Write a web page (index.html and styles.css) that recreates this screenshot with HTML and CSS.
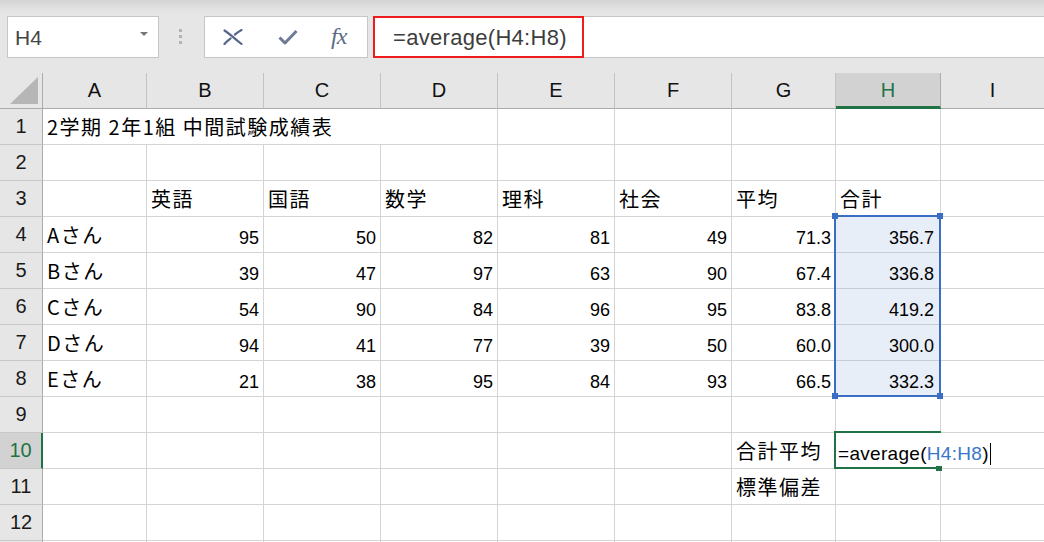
FILE: index.html
```html
<!DOCTYPE html>
<html lang="ja">
<head>
<meta charset="utf-8">
<title>Excel average</title>
<link rel="stylesheet" href="styles.css">
</head>
<body>
<div class="app">
  <div class="toolbar">
    <div class="namebox">
      <span class="namebox-text">H4</span>
      <svg class="namebox-arrow" width="8" height="4" viewBox="0 0 8 4"><path d="M0 0h8L4 4z" fill="#777"/></svg>
    </div>
    <div class="grip"><i></i><i></i><i></i></div>
    <div class="fxbox">
      <svg class="ico-x" width="20" height="16" viewBox="0 0 20 16"><path d="M1.5 1.5 C7 5 12 10 18.5 15 M1.5 15 C3 13 5 11.5 7.5 9.5 M12 5.5 C14 4 16.5 2 18.5 1" fill="none" stroke="#56678a" stroke-width="2.2" stroke-linecap="round"/></svg>
      <svg class="ico-check" width="20" height="16" viewBox="0 0 20 16"><path d="M1.5 8.5 L7 14 L18.5 2" fill="none" stroke="#6d7b95" stroke-width="3" stroke-linejoin="round"/></svg>
      <span class="ico-fx">fx</span>
    </div>
    <div class="formula">
      <div class="formula-hl">=average(H4:H8)</div>
    </div>
  </div>

  <div class="sheet">
    <div class="corner"><svg width="30" height="28" viewBox="0 0 30 28"><path d="M28 0 V27 H0 Z" fill="#b6b6b6"/></svg></div>
    <div class="ch">A</div><div class="ch">B</div><div class="ch">C</div><div class="ch">D</div><div class="ch">E</div><div class="ch">F</div><div class="ch">G</div><div class="ch active">H</div><div class="ch">I</div>

    <div class="rh">1</div>
    <div class="c jp title">2学期 2年1組 中間試験成績表</div><div class="c"></div><div class="c"></div><div class="c"></div><div class="c"></div><div class="c"></div>

    <div class="rh">2</div>
    <div class="c"></div><div class="c"></div><div class="c"></div><div class="c"></div><div class="c"></div><div class="c"></div><div class="c"></div><div class="c"></div><div class="c"></div>

    <div class="rh">3</div>
    <div class="c"></div><div class="c jp">英語</div><div class="c jp">国語</div><div class="c jp">数学</div><div class="c jp">理科</div><div class="c jp">社会</div><div class="c jp">平均</div><div class="c jp">合計</div><div class="c"></div>

    <div class="rh">4</div>
    <div class="c jp">Aさん</div><div class="c n">95</div><div class="c n">50</div><div class="c n">82</div><div class="c n">81</div><div class="c n">49</div><div class="c n">71.3</div><div class="c n sel">356.7</div><div class="c"></div>

    <div class="rh">5</div>
    <div class="c jp">Bさん</div><div class="c n">39</div><div class="c n">47</div><div class="c n">97</div><div class="c n">63</div><div class="c n">90</div><div class="c n">67.4</div><div class="c n sel">336.8</div><div class="c"></div>

    <div class="rh">6</div>
    <div class="c jp">Cさん</div><div class="c n">54</div><div class="c n">90</div><div class="c n">84</div><div class="c n">96</div><div class="c n">95</div><div class="c n">83.8</div><div class="c n sel">419.2</div><div class="c"></div>

    <div class="rh">7</div>
    <div class="c jp">Dさん</div><div class="c n">94</div><div class="c n">41</div><div class="c n">77</div><div class="c n">39</div><div class="c n">50</div><div class="c n">60.0</div><div class="c n sel">300.0</div><div class="c"></div>

    <div class="rh">8</div>
    <div class="c jp">Eさん</div><div class="c n">21</div><div class="c n">38</div><div class="c n">95</div><div class="c n">84</div><div class="c n">93</div><div class="c n">66.5</div><div class="c n sel">332.3</div><div class="c"></div>

    <div class="rh">9</div>
    <div class="c"></div><div class="c"></div><div class="c"></div><div class="c"></div><div class="c"></div><div class="c"></div><div class="c"></div><div class="c"></div><div class="c"></div>

    <div class="rh active">10</div>
    <div class="c"></div><div class="c"></div><div class="c"></div><div class="c"></div><div class="c"></div><div class="c"></div><div class="c jp">合計平均</div><div class="c"></div><div class="c"></div>

    <div class="rh">11</div>
    <div class="c"></div><div class="c"></div><div class="c"></div><div class="c"></div><div class="c"></div><div class="c"></div><div class="c jp">標準偏差</div><div class="c"></div><div class="c"></div>

    <div class="rh">12</div>
    <div class="c"></div><div class="c"></div><div class="c"></div><div class="c"></div><div class="c"></div><div class="c"></div><div class="c"></div><div class="c"></div><div class="c"></div>

    <div class="rh"></div>
    <div class="c"></div><div class="c"></div><div class="c"></div><div class="c"></div><div class="c"></div><div class="c"></div><div class="c"></div><div class="c"></div><div class="c"></div>

    <div class="selection">
      <i class="handle tl"></i><i class="handle tr"></i><i class="handle bl"></i><i class="handle br"></i>
    </div>
    <div class="active-cell"></div>
    <div class="editor">=average(<span class="ref">H4:H8</span>)<span class="caret"></span></div>
    <div class="fill-handle"></div>
  </div>
</div>
</body>
</html>
```

FILE: styles.css
```css
* { box-sizing: border-box; }
html, body { margin: 0; padding: 0; }
body {
  width: 1044px;
  height: 542px;
  overflow: hidden;
  background: #ffffff;
  font-family: "Liberation Sans", "Noto Sans CJK JP", sans-serif;
}
.app { width: 1044px; height: 542px; overflow: hidden; }

/* ---------- toolbar ---------- */
.toolbar {
  height: 73px;
  display: flex;
  align-items: flex-start;
  padding-top: 16px;
  background: linear-gradient(#d4d4d4 0px, #e3e3e3 10px, #e6e6e6 16px, #e6e6e6 100%);
}
.namebox {
  margin-left: 7px;
  width: 152px;
  height: 42px;
  background: #fff;
  border: 1px solid #c6c6c6;
  display: flex;
  align-items: center;
  padding-left: 7px;
  padding-right: 10px;
}
.namebox-text {
  font-size: 21px;
  color: #444;
  padding-top: 2px;
}
.namebox-arrow { margin-left: auto; margin-top: -6px; }
.grip {
  margin-left: 20px;
  padding-top: 13px;
  display: flex;
  flex-direction: column;
  gap: 3px;
}
.grip i { display: block; width: 3px; height: 3px; background: #b3b3b3; }
.fxbox {
  margin-left: 22px;
  width: 164px;
  height: 42px;
  background: #fff;
  border: 1px solid #c6c6c6;
  display: flex;
  align-items: center;
  padding-left: 18px;
}
.ico-x { display: block; }
.ico-check { display: block; margin-left: 35px; }
.ico-fx {
  margin-left: 33px;
  font-family: "Liberation Serif", serif;
  font-style: italic;
  font-size: 24px;
  color: #5b6a87;
  letter-spacing: -1px;
  margin-top: -2px;
}
.formula {
  margin-left: 5px;
  flex: 1;
  height: 42px;
  background: #fff;
  border-top: 1px solid #c6c6c6;
  border-bottom: 1px solid #c6c6c6;
}
.formula-hl {
  width: 211px;
  height: 42px;
  margin-top: -1px;
  border: 2px solid #ee1c1c;
  padding-left: 18px;
  display: flex;
  align-items: center;
  font-size: 22px;
  letter-spacing: 0.3px;
  color: #3d3d3d;
  padding-top: 1px;
}

/* ---------- sheet ---------- */
.sheet {
  position: relative;
  display: grid;
  grid-template-columns: 43px 104px 117px 117px 117px 117px 117px 104px 105px 104px;
  grid-auto-rows: 36px;
  background: #fff;
}
.corner {
  background: #e6e6e6;
  border-right: 1px solid #ababab;
  border-bottom: 1px solid #ababab;
  padding: 4px 0 0 10px;
}
.corner svg { display: block; }
.ch {
  background: #e6e6e6;
  border-right: 1px solid #c3c3c3;
  border-bottom: 1px solid #ababab;
  display: flex;
  align-items: center;
  justify-content: center;
  font-size: 20px;
  color: #111;
}
.ch.active {
  background: #d2d2d2;
  color: #217346;
  border-right-color: #ababab;
  border-bottom: 3px solid #217346;
  padding-top: 2px;
}
.rh {
  background: #e6e6e6;
  border-right: 1px solid #ababab;
  border-bottom: 1px solid #c8c8c8;
  display: flex;
  align-items: center;
  justify-content: center;
  font-size: 20px;
  color: #1a1a1a;
}
.rh.active {
  background: #d2d2d2;
  color: #217346;
  border-right: 2px solid #217346;
}
.c {
  border-right: 1px solid #d4d4d4;
  border-bottom: 1px solid #d4d4d4;
  display: flex;
  align-items: flex-end;
  padding: 0 4px 4px 4px;
  line-height: 20px;
  font-size: 18px;
  color: #000;
  white-space: nowrap;
}
.c.n { justify-content: flex-end; }
.c.jp {
  font-family: "Noto Sans CJK JP", sans-serif;
  font-size: 20px;
  letter-spacing: 1.5px;
  padding-bottom: 7px;
}
.c.title { grid-column: span 4; }
.c.sel { background: #e8eef8; border-bottom-color: #c9cdd3; padding-right: 6px; }

/* ---------- overlays ---------- */
.selection {
  position: absolute;
  left: 834px;
  top: 142px;
  width: 107px;
  height: 182px;
  border: 2px solid #3a6ec4;
}
.handle {
  position: absolute;
  width: 6px;
  height: 6px;
  background: #3a6ec4;
}
.handle.tl { left: -4px; top: -4px; }
.handle.tr { right: -4px; top: -4px; }
.handle.bl { left: -4px; bottom: -4px; }
.handle.br { right: -4px; bottom: -4px; }

.active-cell {
  position: absolute;
  left: 834px;
  top: 358px;
  width: 107px;
  height: 38px;
  border: 2px solid #217346;
}
.editor {
  position: absolute;
  left: 836px;
  top: 360px;
  width: 158px;
  height: 34px;
  background: #fff;
  display: flex;
  align-items: flex-end;
  padding: 0 0 3px 2px;
  line-height: 20px;
  font-size: 19px;
  letter-spacing: 0.3px;
  color: #000;
  white-space: nowrap;
}
.editor .ref { color: #3a76c8; }
.caret {
  display: inline-block;
  width: 1px;
  height: 22px;
  background: #000;
  margin-left: 1px;
  margin-bottom: -1px;
}
.fill-handle {
  position: absolute;
  left: 936px;
  top: 393px;
  width: 6px;
  height: 5px;
  background: #217346;
}
```
